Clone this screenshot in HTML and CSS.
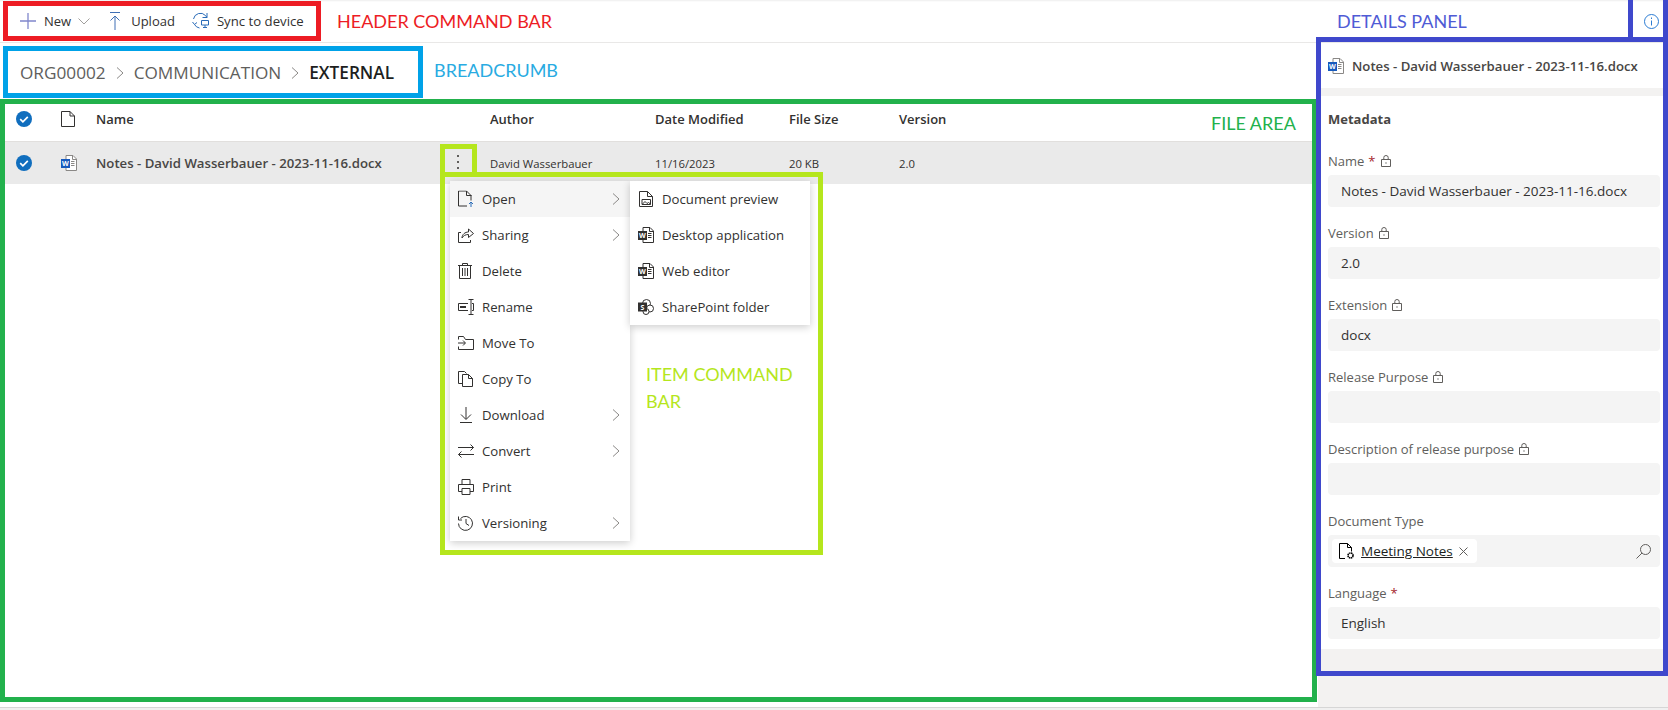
FILE: index.html
```html
<!doctype html>
<html lang="en-US">

<head>
	<title>Document library</title>
	<link rel="stylesheet" href="styles.css">
</head>

<body>

	<svg class="defs" width="0" height="0">
		<symbol id="word" viewBox="0 0 16 16">
			<path d="M5 .5h7l3.500 3.500v11.500h-10.500z" fill="#fff" stroke="#8a8886"/>
			<path d="M11.500 .5v4h4M10 6.500h3.500M10 8.500h3.500M10 10.500h3.500" fill="none" stroke="#8a8886"/>
			<rect y="4" width="9" height="9" fill="#185abd"/>
			<text x="4.500" y="11" class="word-letter">W</text>
		</symbol>
		<symbol id="word-dark" viewBox="0 0 16 16">
			<path d="M5 .5h7l3.500 3.500v11.500h-10.500z" fill="#fff" stroke="#323130"/>
			<path d="M11.500 .5v4h4M10 6.500h3.500M10 8.500h3.500M10 10.500h3.500" fill="none" stroke="#323130"/>
			<rect y="4" width="9" height="9" fill="#323130"/>
			<text x="4.500" y="11" class="word-letter">W</text>
		</symbol>
		<symbol id="lock" viewBox="0 0 12 12">
			<path d="M1.500 4.500h9v7h-9zM3.800 4.500v-2a2.200 2 0 0 1 4.400 0v2" fill="none" stroke="#605e5c"/>
			<rect x="5.400" y="7.400" width="1.200" height="1.200" fill="#605e5c"/>
		</symbol>
		<symbol id="chev" viewBox="0 0 8 12">
			<path d="M1 .5l6 5.500-6 5.500" fill="none" stroke="#8a8886"/>
		</symbol>
		<symbol id="check" viewBox="0 0 16 16">
			<circle cx="8" cy="8" r="8" fill="#106ebe"/>
			<path d="M4.200 8.200l2.700 2.600 4.900-5" fill="none" stroke="#fff" stroke-width="1.700"/>
		</symbol>
	</svg>

	<div class="app">
		<div class="topbar">
			<div class="commands">
				<span class="cmd cmd-new">
					<svg width="16" height="16" viewBox="0 0 16 16"><path d="M8 0v16M0 8h16" stroke="#8087cc" stroke-width="1.300"/></svg>
					New
					<svg class="caret" width="12" height="7" viewBox="0 0 12 7"><path d="M.5.500l5.500 5.500 5.500-5.500" fill="none" stroke="#a19f9d"/></svg>
				</span>
				<span class="cmd cmd-upload">
					<svg width="12" height="18" viewBox="0 0 12 18"><path d="M1 .5h10M6 4v14M1.500 8.500l4.500-4.500 4.500 4.500" fill="none" stroke="#3f6fb5"/></svg>
					Upload
				</span>
				<span class="cmd cmd-sync">
					<svg width="18" height="18" viewBox="0 0 18 18"><path d="M1.500 7a7 7 0 0 1 12-3.500l1.500 2M15 1v4.500h-4.500M.5 10l2 2.500 2.500-2M2.500 12.500a7 7 0 0 0 5 3.500" fill="none" stroke="#2b6cb8"/><path d="M9.500 8.500h7v4.500h-7zM13 13v2M11 15.500h4" fill="none" stroke="#2b6cb8"/></svg>
					Sync to device
				</span>
			</div>
			<div class="info-btn">
				<svg width="15" height="15" viewBox="0 0 15 15"><circle cx="7.500" cy="7.500" r="7" fill="none" stroke="#2b7cd3"/><path d="M7.500 6.500v5M7.500 3.500v1.500" stroke="#2b7cd3"/></svg>
			</div>
		</div>

		<div class="main">
			<div class="files">
				<div class="crumbs">
					<span>ORG00002</span>
					<svg width="8" height="12"><use href="#chev"/></svg>
					<span>COMMUNICATION</span>
					<svg width="8" height="12"><use href="#chev"/></svg>
					<span class="crumb-current">EXTERNAL</span>
				</div>

				<div class="row row-head">
					<svg width="16" height="16"><use href="#check"/></svg>
					<svg width="14" height="16" viewBox="0 0 14 16"><path d="M.5.500h8.500l4.500 4.500v10.500h-13zM9 .5v4.500h4.500" fill="#fff" stroke="#323130"/></svg>
					<span>Name</span>
					<span>Author</span>
					<span>Date Modified</span>
					<span>File Size</span>
					<span>Version</span>
				</div>

				<div class="row row-item">
					<svg width="16" height="16"><use href="#check"/></svg>
					<svg width="16" height="16"><use href="#word"/></svg>
					<span class="file-name">Notes - David Wasserbauer - 2023-11-16.docx</span>
					<span>David Wasserbauer</span>
					<span>11/16/2023</span>
					<span>20 KB</span>
					<span>2.0</span>
					<span class="dots"><i></i><i></i><i></i></span>
				</div>
			</div>

			<div class="details">
				<div class="details-title">
					<svg width="16" height="16"><use href="#word"/></svg>
					Notes - David Wasserbauer - 2023-11-16.docx
				</div>
				<div class="metadata">
					<h3>Metadata</h3>
					<div class="field-label">Name <b>*</b> <svg width="12" height="12"><use href="#lock"/></svg></div>
					<div class="field-input">Notes - David Wasserbauer - 2023-11-16.docx</div>
					<div class="field-label">Version <svg width="12" height="12"><use href="#lock"/></svg></div>
					<div class="field-input">2.0</div>
					<div class="field-label">Extension <svg width="12" height="12"><use href="#lock"/></svg></div>
					<div class="field-input">docx</div>
					<div class="field-label">Release Purpose <svg width="12" height="12"><use href="#lock"/></svg></div>
					<div class="field-input"></div>
					<div class="field-label">Description of release purpose <svg width="12" height="12"><use href="#lock"/></svg></div>
					<div class="field-input"></div>
					<div class="field-label">Document Type</div>
					<div class="field-input field-tags">
						<span class="tag">
							<svg width="16" height="17" viewBox="0 0 16 17"><path d="M6 15.500h-5.500v-15h8l4 4v4M8.500.5v4h4" fill="none" stroke="#000"/><circle cx="11.500" cy="12.500" r="2.500" fill="none" stroke="#000" stroke-width="1.600" stroke-dasharray="1.500 .5"/></svg>
							<a>Meeting Notes</a>
							<svg width="9" height="9" viewBox="0 0 9 9"><path d="M.5.500l8 8M8.500.5l-8 8" stroke="#605e5c"/></svg>
						</span>
						<svg width="15" height="15" viewBox="0 0 15 15"><circle cx="9.500" cy="5.500" r="5" fill="none" stroke="#605e5c"/><path d="M6 9l-5.500 5.500" stroke="#605e5c"/></svg>
					</div>
					<div class="field-label">Language <b>*</b></div>
					<div class="field-input">English</div>
				</div>
			</div>
		</div>

		<div class="menu menu-item">
			<div class="menu-row menu-hover">
				<svg width="16" height="17" viewBox="0 0 16 17"><path d="M9 15.500h-8.500v-15h8l4.500 4.500v5M8.500.5v4.500h5" fill="none" stroke="#323130"/><path d="M13 16.500v-5M11 13.500l2-2 2 2" fill="none" stroke="#2b6cb8"/></svg>
				Open
				<svg class="menu-chev" width="8" height="12"><use href="#chev"/></svg>
			</div>
			<div class="menu-row">
				<svg width="16" height="16" viewBox="0 0 16 16"><path d="M3 5.500h-2.500v10h12v-2.500M4 11c0-3.500 3-6 6.500-6v-3l5 4.500-5 4v-3c-3 0-5 1-6.500 3.500z" fill="none" stroke="#323130"/></svg>
				Sharing
				<svg class="menu-chev" width="8" height="12"><use href="#chev"/></svg>
			</div>
			<div class="menu-row">
				<svg width="14" height="16" viewBox="0 0 14 16"><path d="M0 2.500h14M4.500 2.500v-2h5v2M1.500 2.500v13h11v-13M4.500 5v8M7 5v8M9.500 5v8" fill="none" stroke="#323130"/></svg>
				Delete
			</div>
			<div class="menu-row">
				<svg width="16" height="16" viewBox="0 0 16 16"><path d="M10 4.500h-9.500v7h9.500M10.500 .5h2.500M13 .5h2.500M13 .5v15M10.500 15.500h5M14 4.500h1.500v7h-1.500" fill="none" stroke="#323130"/><rect x="2" y="7" width="6" height="2" fill="#323130"/></svg>
				Rename
			</div>
			<div class="menu-row">
				<svg width="16" height="14" viewBox="0 0 16 14"><path d="M.5 3.500v-3h5l2 3h8v10h-15v-3M0 7h7M5 4.500l2.500 2.500-2.500 2.500" fill="none" stroke="#323130"/></svg>
				Move To
			</div>
			<div class="menu-row">
				<svg width="15" height="16" viewBox="0 0 15 16"><path d="M4.500 12.500h-4v-12h6l2 2M4.500 3.500h6l4 4v8h-10zM10.500 3.500v4h4" fill="none" stroke="#323130"/></svg>
				Copy To
			</div>
			<div class="menu-row">
				<svg width="16" height="16" viewBox="0 0 16 16"><path d="M8 0v12M3 7.500l5 5 5-5M2 15.500h12" fill="none" stroke="#323130"/></svg>
				Download
				<svg class="menu-chev" width="8" height="12"><use href="#chev"/></svg>
			</div>
			<div class="menu-row">
				<svg width="16" height="14" viewBox="0 0 16 14"><path d="M0 3.500h15.500M12.500.5l3 3-3 3M16 10.500h-15.500M3.500 7.500l-3 3 3 3" fill="none" stroke="#323130"/></svg>
				Convert
				<svg class="menu-chev" width="8" height="12"><use href="#chev"/></svg>
			</div>
			<div class="menu-row">
				<svg width="16" height="16" viewBox="0 0 16 16"><path d="M4 5.500v-5h8v5M4 12.500h-3.500v-7h15v7h-3.500M4 9.500h8v6h-8z" fill="none" stroke="#323130"/></svg>
				Print
			</div>
			<div class="menu-row">
				<svg width="16" height="16" viewBox="0 0 16 16"><path d="M2.500 3.500a7 7 0 1 1-2 5M.5 1.500v3.500h3.500M8 4v4.500l3 2" fill="none" stroke="#323130"/></svg>
				Versioning
				<svg class="menu-chev" width="8" height="12"><use href="#chev"/></svg>
			</div>
		</div>

		<div class="menu menu-sub">
			<div class="menu-row">
				<svg width="16" height="16" viewBox="0 0 16 16"><path d="M1.500 15.500v-15h8l5 5v10zM9.500.5v5h5" fill="none" stroke="#323130"/><path d="M4 8.500h8.500v5h-8.500zM4.500 13l2.500-2.500 2 2 1.500-1 2 1.500" fill="none" stroke="#323130"/></svg>
				Document preview
			</div>
			<div class="menu-row">
				<svg width="16" height="16"><use href="#word-dark"/></svg>
				Desktop application
			</div>
			<div class="menu-row">
				<svg width="16" height="16"><use href="#word-dark"/></svg>
				Web editor
			</div>
			<div class="menu-row">
				<svg width="16" height="16" viewBox="0 0 16 16"><circle cx="8.500" cy="4.500" r="4" fill="#fff" stroke="#323130"/><circle cx="12" cy="9.500" r="3.500" fill="#fff" stroke="#323130"/><circle cx="8" cy="12.500" r="3" fill="#fff" stroke="#323130"/><rect y="3.500" width="9" height="9" fill="#323130"/><text x="4.500" y="10.700" class="word-letter">S</text></svg>
				SharePoint folder
			</div>
		</div>

		<!-- annotations drawn on top of the screenshot -->
		<div class="mark mark-header"></div>
		<div class="mark mark-crumb"></div>
		<div class="mark mark-files"></div>
		<div class="mark mark-dots"></div>
		<div class="mark mark-menu"></div>
		<div class="mark mark-info"></div>
		<div class="mark mark-details"></div>

		<div class="note note-header">HEADER COMMAND BAR</div>
		<div class="note note-crumb">BREADCRUMB</div>
		<div class="note note-files">FILE AREA</div>
		<div class="note note-menu">ITEM COMMAND<br>BAR</div>
		<div class="note note-details">DETAILS PANEL</div>
	</div>

</body>
</html>
```

FILE: styles.css
```css
:root {
	--text: #323130;
	--muted: #605e5c;
	--field: #f4f4f4;
	--panel: #f3f2f1;
}

body {
	margin: 0;
	height: 710px;
	overflow: hidden;
	background: #f0f0f0;
	color: var(--text);
	font-family: "Open Sans", "Noto Sans", sans-serif;
	font-size: 13px;
}

.defs {
	display: none;
}

.word-letter {
	font-family: "Open Sans", sans-serif;
	font-size: 7px;
	font-weight: 700;
	fill: #fff;
	text-anchor: middle;
}

svg {
	flex: none;
}

.app {
	position: relative;
	height: 710px;
}

/* top bar */

.topbar {
	display: flex;
	justify-content: space-between;
	align-items: center;
	height: 42px;
	background: #fff;
	border-bottom: 1px solid #e9e8e7;
	box-shadow: inset 0 3px 2px -2px #eee;
}

.commands {
	display: flex;
	align-items: center;
	padding-left: 20px;
}

.cmd {
	display: flex;
	align-items: center;
}

.cmd-new {
	gap: 8px;
}

.caret {
	margin-left: -1px;
}

.cmd-upload {
	gap: 10px;
	margin-left: 19px;
}

.cmd-sync {
	gap: 7px;
	margin-left: 17px;
	font-size: 13.200px;
}

.info-btn {
	display: flex;
	margin-right: 9px;
}

/* main area */

.main {
	display: flex;
	height: 664px;
	background: #fff;
	border-bottom: 1px solid #d6d6d6;
}

.files {
	flex: 1;
}

.crumbs {
	display: flex;
	align-items: center;
	gap: 10px;
	height: 59px;
	padding: 0 0 2px 20px;
	color: var(--muted);
	font-size: 17.200px;
}

.crumb-current {
	color: #201f1e;
	font-weight: 600;
}

.row {
	display: grid;
	grid-template-columns: 45px 35px 394px 165px 134px 110px 1fr;
	align-items: center;
	position: relative;
	padding-left: 16px;
}

.row-head {
	box-sizing: border-box;
	height: 38px;
	padding-bottom: 7px;
	font-weight: 600;
	border-bottom: 1px solid #e1dfdd;
}

.row-item {
	height: 42px;
	background: #eaeaea;
	font-size: 11.300px;
}

.file-name {
	color: #484644;
	font-size: 13.200px;
	font-weight: 600;
}

.dots {
	position: absolute;
	left: 457px;
	top: 13px;
	display: flex;
	flex-direction: column;
	gap: 4px;
}

.dots i {
	width: 2px;
	height: 2px;
	background: #605e5c;
}

/* details panel */

.details {
	display: flex;
	flex-direction: column;
	width: 350px;
	background: var(--panel);
}

.details-title {
	display: flex;
	align-items: center;
	gap: 8px;
	height: 45px;
	margin-bottom: 8px;
	padding-left: 10px;
	background: #fff;
	color: #484644;
	font-size: 13.200px;
	font-weight: 600;
}

.metadata {
	padding: 0 8px 10px 10px;
	background: #fff;
}

.metadata h3 {
	margin: 0;
	height: 51px;
	line-height: 46px;
	color: #484644;
	font-size: 13px;
	font-weight: 700;
}

.field-label {
	display: flex;
	align-items: center;
	gap: 4px;
	height: 28px;
	color: var(--muted);
}

.field-label b {
	color: #a4262c;
	font-weight: 400;
}

.field-input {
	display: flex;
	align-items: center;
	height: 32px;
	margin-bottom: 12px;
	padding-left: 13px;
	border-radius: 4px;
	background: var(--field);
	font-size: 13.500px;
}

.field-input:last-child {
	margin-bottom: 0;
}

.field-tags {
	justify-content: space-between;
	padding: 0 9px 0 4px;
}

.tag {
	display: flex;
	align-items: center;
	gap: 6px;
	height: 24px;
	padding: 0 9px 0 7px;
	border-radius: 4px;
	background: #fff;
	font-size: 13.500px;
}

.tag a {
	color: #201f1e;
	text-decoration: underline;
}

/* context menus */

.menu {
	position: absolute;
	background: #fff;
	box-shadow: 0 2px 8px rgba(0, 0, 0, 0.2);
	font-size: 13.200px;
}

.menu-item {
	left: 450px;
	top: 181px;
	width: 180px;
}

.menu-sub {
	left: 630px;
	top: 181px;
	width: 180px;
}

.menu-row {
	display: flex;
	align-items: center;
	position: relative;
	height: 36px;
	padding-left: 32px;
}

.menu-row > svg:first-child {
	position: absolute;
	left: 8px;
	top: 50%;
	transform: translateY(-50%);
}

.menu-hover {
	background: #f5f5f5;
}

.menu-chev {
	position: absolute;
	right: 10px;
}

/* annotations */

.mark {
	position: absolute;
	box-sizing: border-box;
	border: 5px solid;
}

.mark-header {
	left: 3px;
	top: 1px;
	width: 318px;
	height: 40px;
	border-color: #ed1c24;
}

.mark-crumb {
	left: 3px;
	top: 46px;
	width: 420px;
	height: 52px;
	border-color: #00a2e8;
}

.mark-files {
	left: 0;
	top: 99px;
	width: 1317px;
	height: 603px;
	border-color: #22b14c;
}

.mark-dots {
	left: 440px;
	top: 144px;
	width: 37px;
	height: 33px;
	border-color: #b5e61d;
}

.mark-menu {
	left: 440px;
	top: 172px;
	width: 383px;
	height: 383px;
	border-color: #b5e61d;
}

.mark-info {
	left: 1628px;
	top: -5px;
	width: 40px;
	height: 47px;
	border-color: #3f48cc;
}

.mark-details {
	left: 1316px;
	top: 37px;
	width: 352px;
	height: 639px;
	border-color: #3f48cc;
}

.note {
	position: absolute;
	font-family: Lato, "Open Sans", sans-serif;
	font-size: 18px;
	line-height: 27px;
	white-space: nowrap;
}

.note-header {
	left: 337px;
	top: 8px;
	color: #ed1c24;
}

.note-crumb {
	left: 434px;
	top: 57px;
	color: #29abe2;
}

.note-files {
	left: 1211px;
	top: 110px;
	color: #22b14c;
}

.note-menu {
	left: 646px;
	top: 361px;
	color: #b5e61d;
}

.note-details {
	left: 1337px;
	top: 8px;
	color: #4f5bd5;
}
```
